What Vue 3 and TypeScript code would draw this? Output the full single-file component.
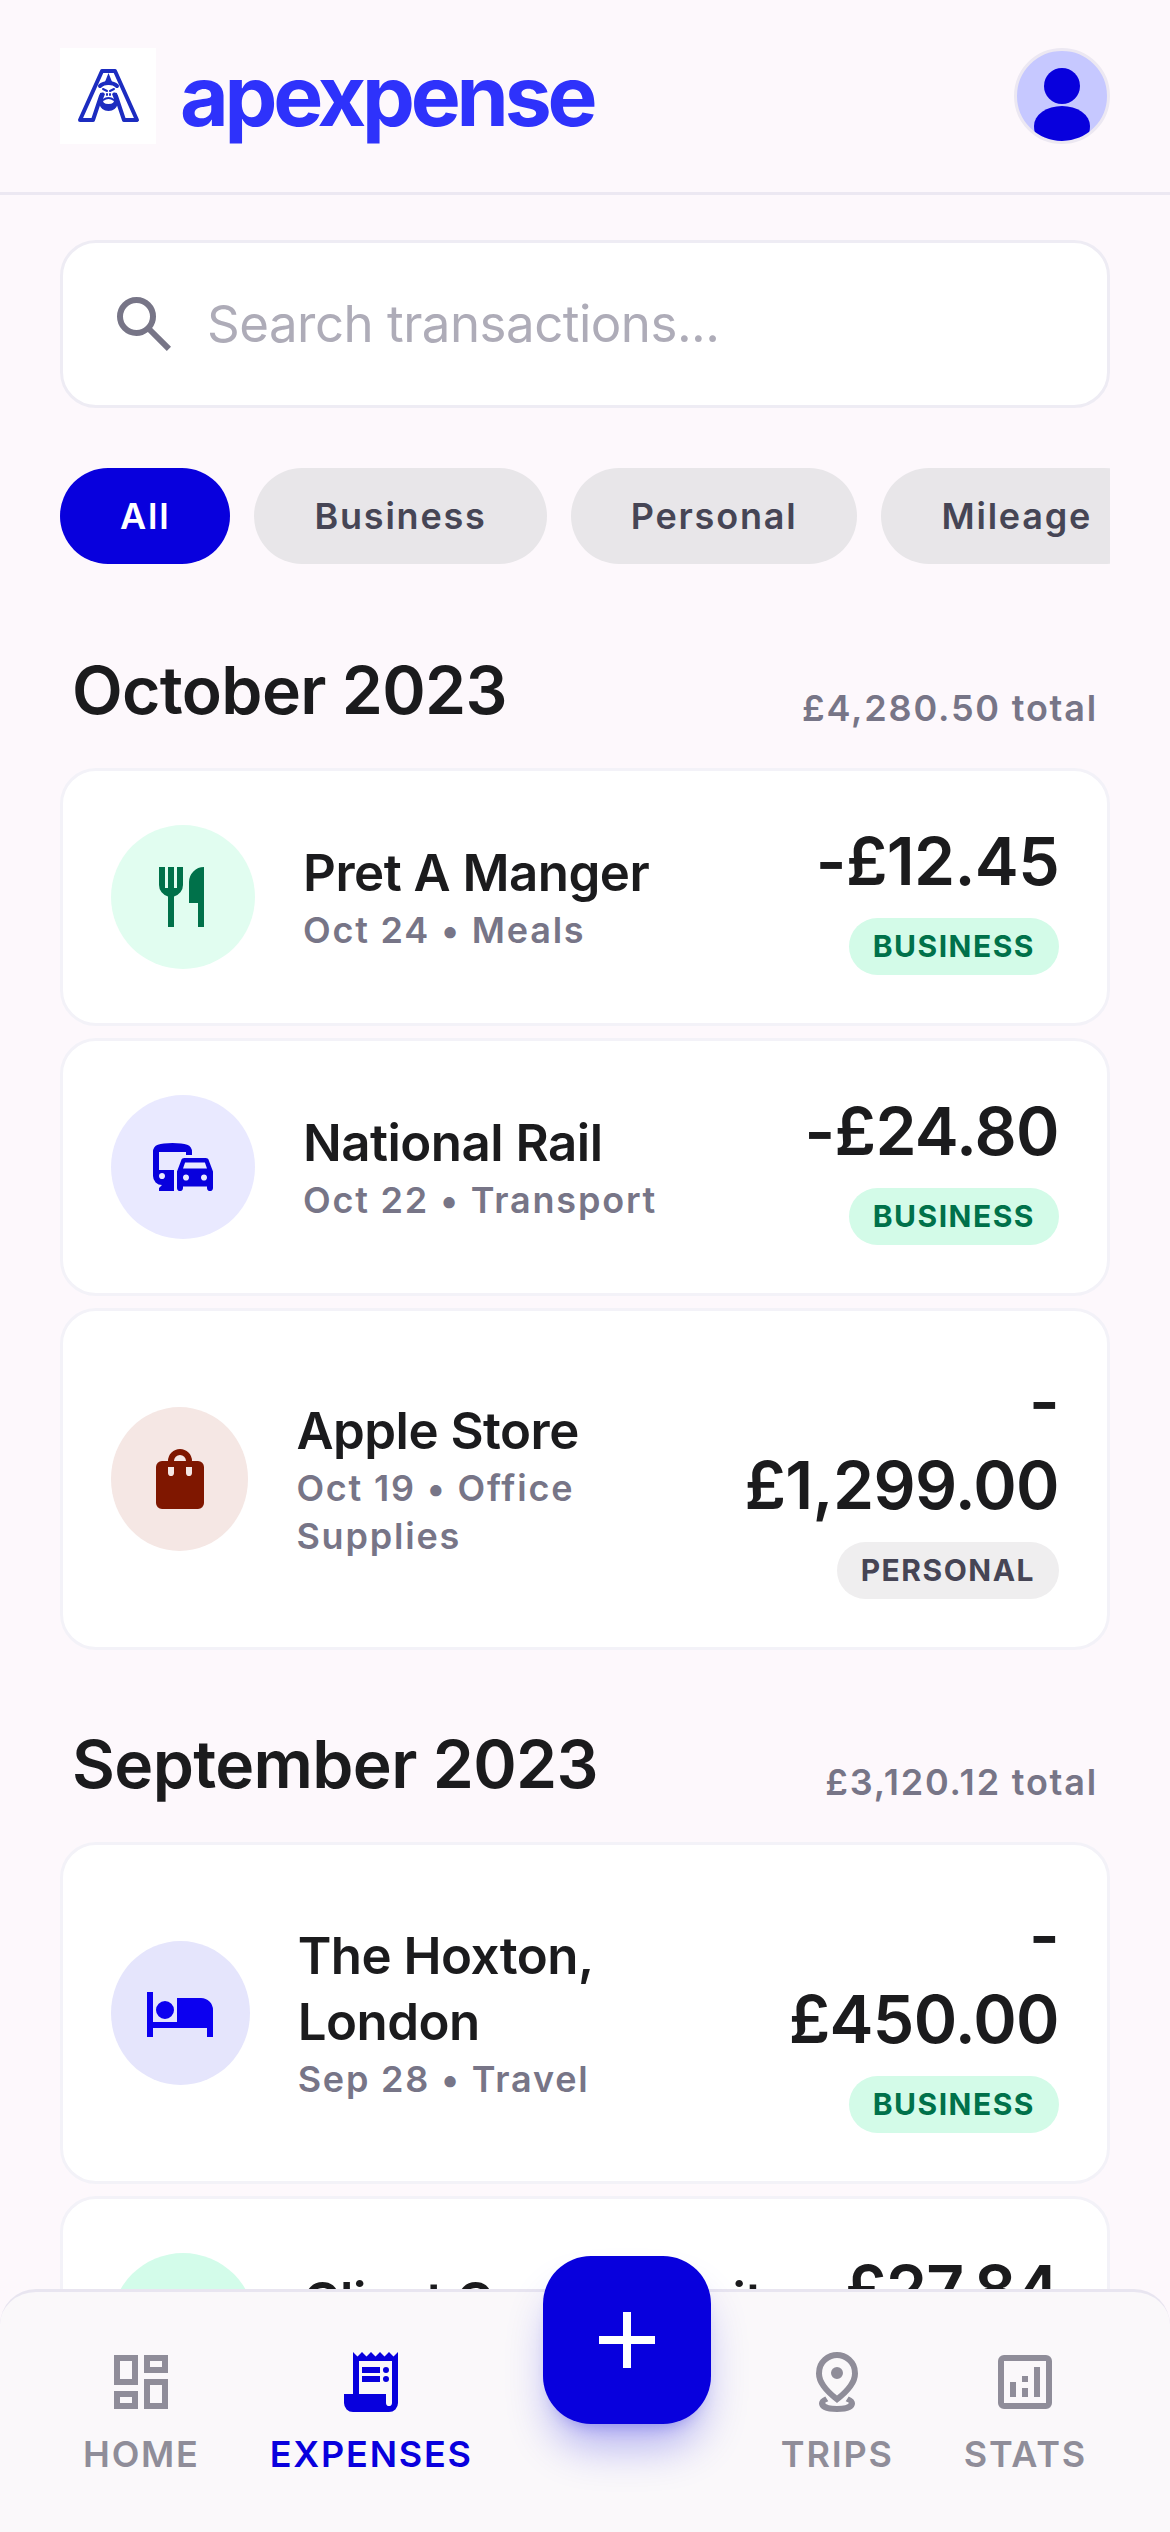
<script setup lang="ts">
import { ref } from 'vue'

type Tag = 'Business' | 'Personal'

interface Transaction {
  title: string
  detail: string
  amount: string
  tag: Tag
  icon: string
  tone: string
}

interface Month {
  name: string
  total: string
  items: Transaction[]
}

const query = ref('')
const filters = ['All', 'Business', 'Personal', 'Mileage']
const activeFilter = ref('All')

const icons: Record<string, string> = {
  meal: 'M7 22V11.85q-1.275-.35-2.138-1.4T4 8V2h2v7h1V2h2v7h1V2h2v6q0 1.4-.863 2.45T9 11.85V22zm10 0v-8h-3V7q0-2.075 1.463-3.538T19 2v20z',
  commute:
    'M4 20v-1l1-1q-1.25 0-2.125-.875T2 15V7q0-1.9 1.625-2.45T8.5 4t4.875.55T15 7v1h-2V7H4v6h5v7zm1-4q.425 0 .713-.288T6 15t-.288-.713T5 14t-.713.288T4 15t.288.713T5 16zM11 20q-.425 0-.713-.288T10 19v-5.5l1.45-3.85q.1-.3.363-.475T12.4 9h7.2q.325 0 .588.175t.362.475L22 13.5V19q0 .425-.288.713T21 20t-.713-.288T20 19v-.5h-8v.5q0 .425-.288.713T11 20zm1-7.5h8l-.7-2h-6.6zM13 16.5q.425 0 .713-.288T14 15.5t-.288-.713T13 14.5t-.713.288T12 15.5t.288.713.712.287zm6 0q.425 0 .713-.288T20 15.5t-.288-.713T19 14.5t-.713.288T18 15.5t.288.713.712.287z',
  bag: 'M6 22q-.825 0-1.413-.588T4 20V8q0-.825.588-1.413T6 6h2q0-1.65 1.175-2.825T12 2t2.825 1.175T16 6h2q.825 0 1.413.588T20 8v12q0 .825-.588 1.413T18 22zm4-16h4q0-.825-.588-1.413T12 4t-1.413.588T10 6zm-1 5q.425 0 .713-.288T10 10V8H8v2q0 .425.288.713T9 11zm6 0q.425 0 .713-.288T16 10V8h-2v2q0 .425.288.713T15 11z',
  bed: 'M1 20V5h2v10h8V7h8a4 4 0 0 1 4 4v9h-2v-3H3v3zM7 8a3 3 0 1 1 0 6 3 3 0 0 1 0-6z',
  home: 'M3 3h8v10H3zM5 5v6h4V5zM13 3h8v6h-8zM15 5v2h4V5zM3 15h8v6H3zM5 17v2h4v-2zM13 11h8v10h-8zM15 13v6h4v-6z',
  receipt:
    'M6 22q-1.25 0-2.125-.875T3 19v-3h3V2l1.5 1.5L9 2l1.5 1.5L12 2l1.5 1.5L15 2l1.5 1.5L18 2l1.5 1.5L21 2v17q0 1.25-.875 2.125T18 22zM18 20q.425 0 .713-.288T19 19V5H8v11h9v3q0 .425.288.713T18 20zM9 7h6v2H9zM9 10h6v2H9zM17 7a1 1 0 1 1 0 2 1 1 0 0 1 0-2zM17 10a1 1 0 1 1 0 2 1 1 0 0 1 0-2z',
  pin: 'M12 19Q8.475 16.4 6.737 13.95T5 9.15q0-1.775.637-3.112T7.275 3.8t2.25-1.35T12 2t2.475.45 2.25 1.35 1.638 2.238T19 9.15q0 2.35-1.737 4.8T12 19zM12 16.5q2.475-2.05 3.737-3.875T17 9.15q0-2.525-1.612-3.838T12 4 8.613 5.313 7 9.15q0 1.65 1.263 3.475T12 16.5zM12 7a2 2 0 1 1 0 4 2 2 0 0 1 0-4zM8.1 16.8Q6 17.7 6 19.1 6 22 12 22t6-2.9q0-1.4-2.1-2.3l-1 1.6q1 .3 1.1.6-.6 1-4 1t-4-1q.1-.3 1.1-.6z',
  stats:
    'M5 21q-.825 0-1.413-.588T3 19V5q0-.825.588-1.413T5 3h14q.825 0 1.413.588T21 5v14q0 .825-.588 1.413T19 21zM5 19h14V5H5zM7 12h2v5H7zM15 7h2v10h-2zM11 14h2v3h-2zM11 10h2v2h-2z',
}

const months: Month[] = [
  {
    name: 'October 2023',
    total: '£4,280.50 total',
    items: [
      { title: 'Pret A Manger', detail: 'Oct 24 • Meals', amount: '-£12.45', tag: 'Business', icon: 'meal', tone: 'mint' },
      { title: 'National Rail', detail: 'Oct 22 • Transport', amount: '-£24.80', tag: 'Business', icon: 'commute', tone: 'indigo' },
      { title: 'Apple Store', detail: 'Oct 19 • Office Supplies', amount: '-£1,299.00', tag: 'Personal', icon: 'bag', tone: 'rust' },
    ],
  },
  {
    name: 'September 2023',
    total: '£3,120.12 total',
    items: [
      { title: 'The Hoxton, London', detail: 'Sep 28 • Travel', amount: '-£450.00', tag: 'Business', icon: 'bed', tone: 'violet' },
      { title: 'Client Campus Suite', detail: 'Sep 25 • Meals', amount: '-£27.84', tag: 'Business', icon: 'meal', tone: 'green' },
    ],
  },
]
</script>

<template>
  <div class="app">
    <header class="topbar">
      <a class="brand" href="#">
        <svg class="logo" viewBox="0 0 96 96" aria-hidden="true">
          <rect width="96" height="96" fill="#fff" />
          <g fill="none" stroke="#1c2cc0" stroke-linejoin="round" stroke-linecap="round">
            <path d="M41 48 33 72H20L42 23h13l22 49H64L56 48" stroke-width="4" />
            <path d="M40 38q3-3 8.500-3t8.500 3" stroke-width="4" />
          </g>
          <path fill="#1c2cc0" d="M48.500 25l4 10h-8zM40 45l5-1v6l7 0v-6l5 1 1 10q-2 8-9.500 8T39 55z" />
          <path fill="#fff" d="M42 39q6-3 13 0v4l-3 3 2 5q1 5-5.500 5T43 51l2-5-3-3z" />
          <g fill="none" stroke="#1c2cc0" stroke-linecap="round">
            <path d="M43 41l4 2M54 41l-4 2" stroke-width="2" />
            <path d="M47 46v1M50 46v1M43 52q5.500-4 11 0" stroke-width="2" />
          </g>
        </svg>
        <span class="brand-name">apexpense</span>
      </a>
      <button class="avatar" type="button" aria-label="Profile">
        <svg viewBox="0 0 90 90" aria-hidden="true">
          <circle cx="45" cy="35" r="18" />
          <path d="M17 75a28 20 0 0 1 56 0q0 6-3 15H20q-3-9-3-15z" />
        </svg>
      </button>
    </header>

    <main class="content">
      <div class="search">
        <label class="search-label" for="search">
          <svg class="icon" viewBox="0 0 24 24" role="img" aria-label="Search transactions">
            <path d="M19.6 21l-6.3-6.3q-.75.6-1.725.95T9.5 16q-2.725 0-4.612-1.888T3 9.5t1.888-4.612T9.5 3t4.613 1.888T16 9.5q0 1.1-.35 2.075T14.7 13.3l6.3 6.3zM9.5 14q1.875 0 3.188-1.313T14 9.5t-1.312-3.187T9.5 5 6.313 6.313 5 9.5t1.313 3.188T9.5 14z" />
          </svg>
        </label>
        <input id="search" v-model="query" type="text" placeholder="Search transactions..." />
      </div>

      <div class="chips">
        <button
          v-for="filter in filters"
          :key="filter"
          type="button"
          class="chip"
          :class="{ active: filter === activeFilter }"
          @click="activeFilter = filter"
        >
          {{ filter }}
        </button>
      </div>

      <section v-for="month in months" :key="month.name" class="month">
        <div class="month-head">
          <h2>{{ month.name }}</h2>
          <span class="month-total">{{ month.total }}</span>
        </div>
        <ul class="cards">
          <li v-for="item in month.items" :key="item.title" class="card">
            <div class="card-main">
              <div class="badge-icon" :class="item.tone">
                <svg class="icon" viewBox="0 0 24 24" aria-hidden="true">
                  <path fill-rule="evenodd" :d="icons[item.icon]" />
                </svg>
              </div>
              <div>
                <h3>{{ item.title }}</h3>
                <p class="detail">{{ item.detail }}</p>
              </div>
            </div>
            <div class="card-side">
              <p class="amount">{{ item.amount }}</p>
              <span class="tag" :class="item.tag.toLowerCase()">{{ item.tag }}</span>
            </div>
          </li>
        </ul>
      </section>
    </main>

    <nav class="tabbar">
      <a class="tab" href="#">
        <svg class="icon" viewBox="0 0 24 24" aria-hidden="true"><path fill-rule="evenodd" :d="icons.home" /></svg>
        <span>Home</span>
      </a>
      <a class="tab active" href="#" aria-current="page">
        <svg class="icon" viewBox="0 0 24 24" aria-hidden="true"><path fill-rule="evenodd" :d="icons.receipt" /></svg>
        <span>Expenses</span>
      </a>
      <button class="fab" type="button" aria-label="Add expense">
        <svg viewBox="0 0 24 24" aria-hidden="true"><path d="M11 19v-6H5v-2h6V5h2v6h6v2h-6v6z" /></svg>
      </button>
      <a class="tab" href="#">
        <svg class="icon" viewBox="0 0 24 24" aria-hidden="true"><path fill-rule="evenodd" :d="icons.pin" /></svg>
        <span>Trips</span>
      </a>
      <a class="tab" href="#">
        <svg class="icon" viewBox="0 0 24 24" aria-hidden="true"><path fill-rule="evenodd" :d="icons.stats" /></svg>
        <span>Stats</span>
      </a>
    </nav>
  </div>
</template>

<style>
body {
  margin: 0;
  background: #fdf8fc;
}
</style>

<style scoped>
.app,
.app * {
  box-sizing: border-box;
}

.app {
  min-height: 100vh;
  background: #fdf8fc;
  color: #1b1b1d;
  font-family: Inter, 'Liberation Sans', sans-serif;
}

button,
input {
  font: inherit;
  border: 0;
  margin: 0;
}

svg {
  display: block;
  fill: currentColor;
}

.icon {
  width: 72px;
  height: 72px;
  flex: none;
}

.topbar {
  display: flex;
  align-items: center;
  justify-content: space-between;
  padding: 48px 60px;
  border-bottom: 3px solid #ece8f2;
}

.brand {
  display: flex;
  align-items: center;
  gap: 24px;
  color: #2e32fb;
  text-decoration: none;
}

.logo {
  width: 96px;
  height: 96px;
}

.brand-name {
  font-size: 84px;
  line-height: 96px;
  font-weight: 700;
  letter-spacing: -0.05em;
}

.avatar {
  width: 96px;
  height: 96px;
  padding: 0;
  border: 3px solid #ece8f2;
  border-radius: 50%;
  background: #c6c8ff;
  color: #0800dd;
  overflow: hidden;
}

.content {
  padding: 45px 60px 48px;
}

.search {
  display: flex;
  align-items: center;
  gap: 27px;
  height: 168px;
  padding: 0 45px;
  border: 3px solid #eeecf4;
  border-radius: 36px;
  background: #fff;
}

.search-label {
  color: #777587;
}

.search input {
  flex: 1;
  min-width: 0;
  padding: 0;
  background: none;
  color: #1b1b1d;
  font-size: 51px;
  line-height: 72px;
  letter-spacing: -0.01em;
  outline: none;
}

.search input::placeholder {
  color: #aeacb8;
  opacity: 1;
}

.chips {
  display: flex;
  gap: 24px;
  margin-top: 60px;
  overflow: hidden;
}

.chip {
  flex: none;
  padding: 24px 60px;
  border-radius: 48px;
  background: #e8e6e9;
  color: #464555;
  font-size: 36px;
  line-height: 48px;
  font-weight: 600;
  letter-spacing: 0.05em;
}

.chip.active {
  background: #0800dd;
  color: #fff;
}

.month {
  margin-top: 72px;
}

.chips + .month {
  margin-top: 84px;
}

.month-head {
  display: flex;
  align-items: flex-end;
  justify-content: space-between;
  padding: 0 12px;
}

h2,
h3,
p {
  margin: 0;
}

h2,
.amount {
  font-size: 66px;
  line-height: 84px;
  font-weight: 600;
  letter-spacing: -0.01em;
}

.month-total,
.detail {
  color: #777587;
  font-size: 36px;
  line-height: 48px;
  font-weight: 600;
  letter-spacing: 0.05em;
}

.cards {
  display: flex;
  flex-direction: column;
  gap: 12px;
  margin: 36px 0 0;
  padding: 0;
  list-style: none;
}

.card {
  display: flex;
  align-items: center;
  justify-content: space-between;
  padding: 48px;
  border: 3px solid #f3f2f8;
  border-radius: 36px;
  background: #fff;
}

.card-main {
  display: flex;
  align-items: center;
  gap: 48px;
}

.badge-icon {
  display: flex;
  align-items: center;
  justify-content: center;
  width: 144px;
  height: 144px;
  border-radius: 50%;
}

.mint {
  background: #e1fdf0;
  color: #00714a;
}

.indigo {
  background: #e9e9ff;
  color: #0800dd;
}

.rust {
  background: #f5e7e4;
  color: #7f1700;
}

.violet {
  background: #e5e5fc;
  color: #0c00f0;
}

.green {
  background: #d3fcea;
  color: #00714a;
}

h3 {
  font-size: 51px;
  line-height: 66px;
  font-weight: 600;
  letter-spacing: -0.01em;
}

.card-side {
  display: flex;
  flex-direction: column;
  align-items: flex-end;
  gap: 15px;
  text-align: right;
}

.tag {
  padding: 6px 24px;
  border-radius: 36px;
  font-size: 30px;
  line-height: 45px;
  font-weight: 700;
  letter-spacing: 0.05em;
  text-transform: uppercase;
}

.tag.business {
  background: #d3fbe8;
  color: #00714a;
}

.tag.personal {
  background: #efeeef;
  color: #464555;
}

.tabbar {
  position: fixed;
  left: 0;
  right: 0;
  bottom: 0;
  display: flex;
  align-items: center;
  justify-content: space-around;
  height: 243px;
  padding: 0 48px;
  border-top: 3px solid #e8e5f0;
  border-radius: 36px 36px 0 0;
  background: #faf8fa;
}

.tab {
  display: flex;
  flex-direction: column;
  align-items: center;
  gap: 12px;
  color: #8f8d99;
  font-size: 36px;
  line-height: 48px;
  font-weight: 600;
  letter-spacing: 0.05em;
  text-transform: uppercase;
  text-decoration: none;
}

.tab.active {
  color: #0800dd;
}

.fab {
  position: relative;
  top: -72px;
  display: flex;
  align-items: center;
  justify-content: center;
  width: 168px;
  height: 168px;
  padding: 0;
  border-radius: 48px;
  background: #0800dd;
  color: #fff;
  box-shadow:
    0 30px 45px -9px rgba(8, 0, 221, 0.3),
    0 12px 18px -12px rgba(8, 0, 221, 0.3);
}

.fab svg {
  width: 96px;
  height: 96px;
}
</style>
